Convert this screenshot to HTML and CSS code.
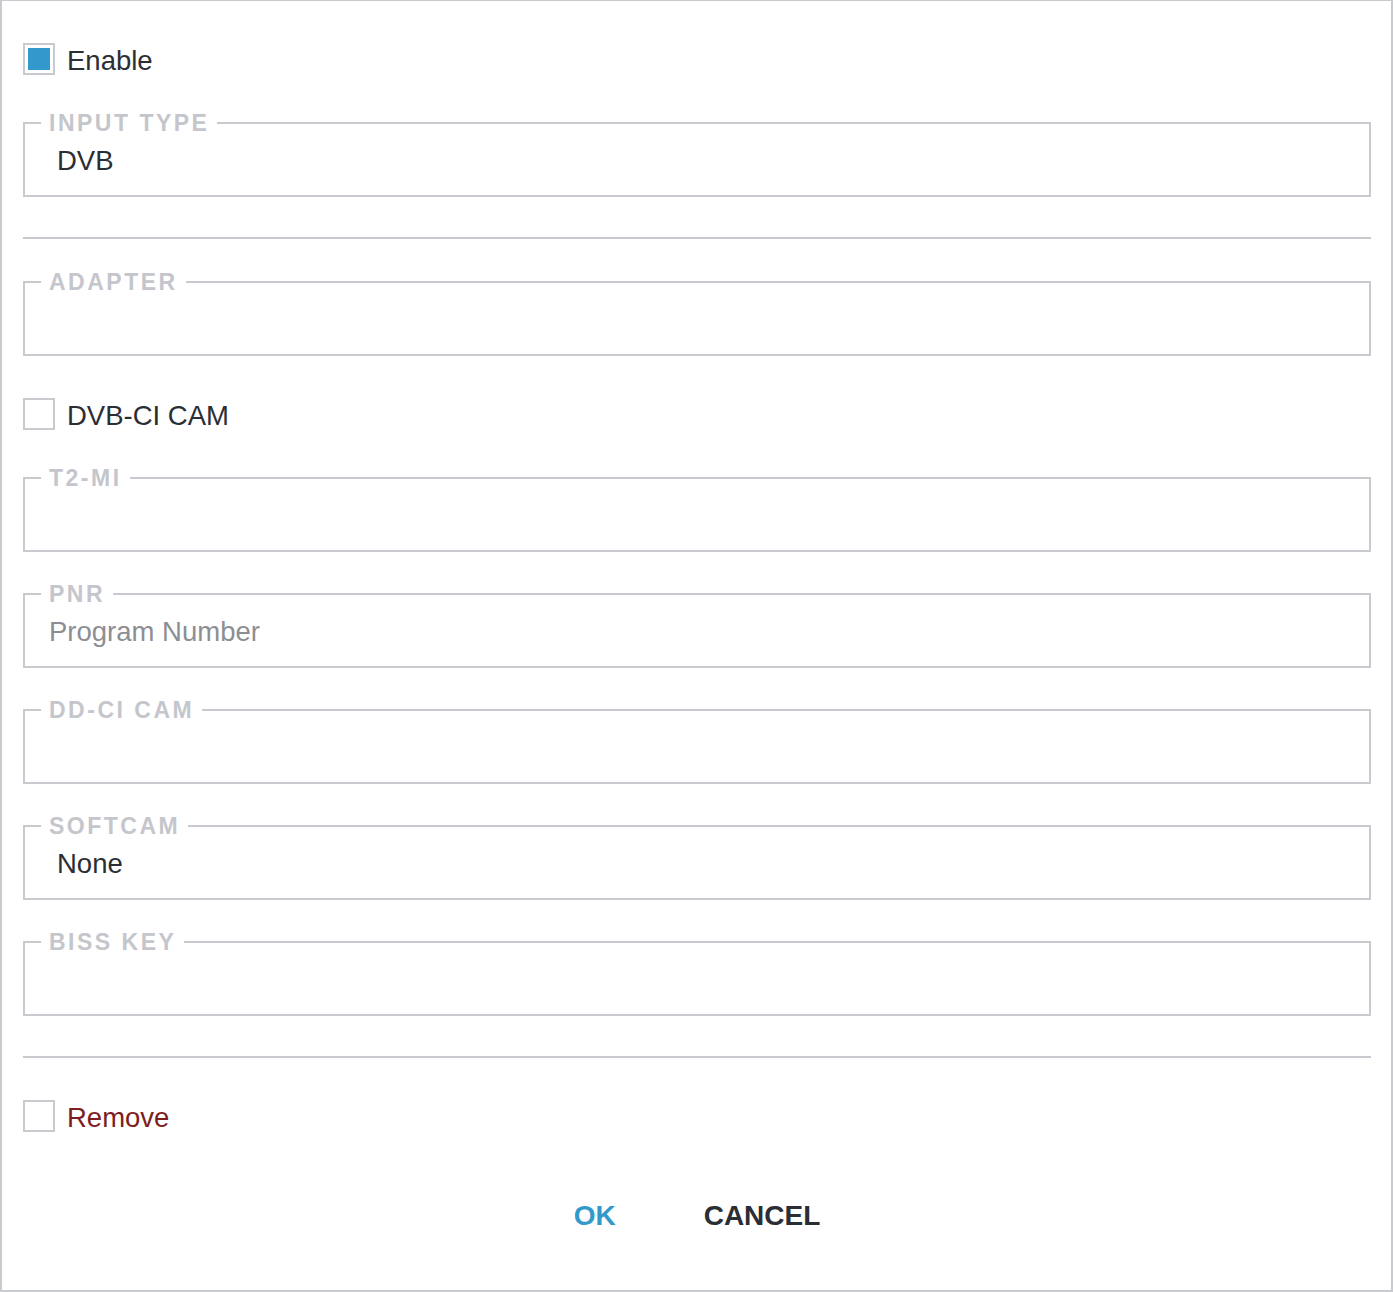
FILE: index.html
```html
<!DOCTYPE html>
<html lang="en">
<head>
<meta charset="utf-8">
<title>Input settings</title>
<link rel="stylesheet" href="styles.css">
</head>
<body>
<div class="dialog">
  <label class="check-row first">
    <span class="box checked"><span class="mark"></span></span>
    <span class="check-label">Enable</span>
  </label>

  <fieldset class="fs after-check">
    <legend>Input Type</legend>
    <div class="field select">DVB</div>
  </fieldset>

  <div class="sep"></div>

  <fieldset class="fs after-sep">
    <legend>Adapter</legend>
    <div class="field"></div>
  </fieldset>

  <label class="check-row">
    <span class="box"></span>
    <span class="check-label">DVB-CI CAM</span>
  </label>

  <fieldset class="fs after-check">
    <legend>T2-MI</legend>
    <div class="field"></div>
  </fieldset>

  <fieldset class="fs">
    <legend>PNR</legend>
    <div class="field placeholder">Program Number</div>
  </fieldset>

  <fieldset class="fs">
    <legend>DD-CI CAM</legend>
    <div class="field"></div>
  </fieldset>

  <fieldset class="fs">
    <legend>Softcam</legend>
    <div class="field select">None</div>
  </fieldset>

  <fieldset class="fs">
    <legend>BISS Key</legend>
    <div class="field"></div>
  </fieldset>

  <div class="sep"></div>

  <label class="check-row after-sep">
    <span class="box"></span>
    <span class="check-label danger">Remove</span>
  </label>

  <div class="actions">
    <button class="btn ok">OK</button>
    <button class="btn cancel">Cancel</button>
  </div>
</div>
</body>
</html>
```

FILE: styles.css
```css
html, body {
  margin: 0;
  padding: 0;
  background: #ffffff;
}

body {
  font-family: "Liberation Sans", Arial, Helvetica, sans-serif;
  color: #2b2e35;
}

.dialog {
  box-sizing: border-box;
  width: 1393px;
  height: 1292px;
  border: 2px solid #c9cacf;
  border-top-width: 1px;
  padding: 42px 20px 0 21px;
  display: flex;
  flex-direction: column;
}

.check-row {
  display: flex;
  align-items: flex-start;
  gap: 12px;
  height: 32px;
  margin-top: 42px;
  flex: none;
}

.check-row.first {
  margin-top: 0;
}

.check-row.after-sep {
  margin-top: 42px;
}

.box {
  box-sizing: border-box;
  width: 32px;
  height: 32px;
  border: 2px solid #c9cacf;
  padding: 3px;
  background: #fff;
  flex: none;
}

.mark {
  display: block;
  width: 22px;
  height: 22px;
  background: #3399cc;
}

.check-label {
  font-size: 27.5px;
  line-height: 36px;
  height: 32px;
  color: #2b2e35;
}

.check-label.danger {
  color: #7d1d1d;
}

.fs {
  margin: 30px 0 0 0;
  padding: 0 16px 8px 16px;
  border: 2px solid #c9cacf;
  min-width: 0;
  flex: none;
}

.fs.after-check {
  margin-top: 36px;
}

.fs.after-sep {
  margin-top: 31px;
}

.fs legend {
  padding: 0 8px;
  font-size: 23px;
  line-height: 24px;
  font-weight: 700;
  letter-spacing: 2.5px;
  text-transform: uppercase;
  color: #c4c6cc;
}

.field {
  height: 52px;
  box-sizing: border-box;
  padding: 0 8px;
  display: flex;
  align-items: center;
  font-size: 27.5px;
  color: #2b2e35;
}

.field.select {
  padding-left: 16px;
}

.field.placeholder {
  color: #8c8e94;
}

.sep {
  height: 2px;
  background: #c9cacf;
  margin-top: 40px;
  flex: none;
}

.actions {
  display: flex;
  justify-content: center;
  gap: 44px;
  margin-top: 60px;
}

.btn {
  font-family: "Liberation Sans", Arial, Helvetica, sans-serif;
  font-size: 28px;
  font-weight: 700;
  line-height: 48px;
  text-transform: uppercase;
  background: none;
  border: 0;
  padding: 0 22px;
  cursor: pointer;
}

.btn.ok {
  color: #3399cc;
}

.btn.cancel {
  color: #2b2e35;
}
```
